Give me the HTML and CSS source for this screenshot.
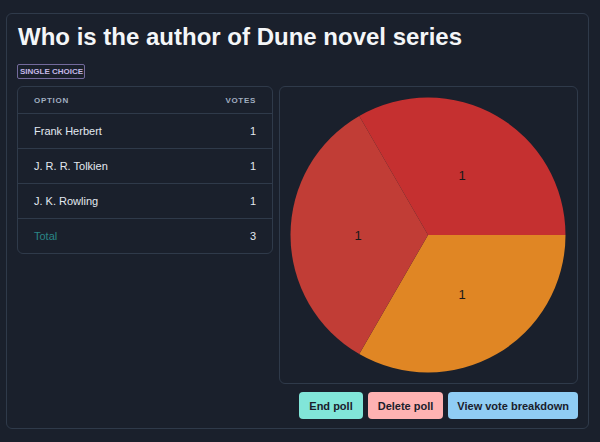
FILE: index.html
```html
<!DOCTYPE html>
<html lang="en">
<head>
<meta charset="utf-8">
<title>Poll</title>
<link rel="stylesheet" href="styles.css">
</head>
<body>
<div class="card">
  <h1 class="title">Who is the author of Dune novel series</h1>
  <span class="badge">Single choice</span>
  <div class="content">
    <div class="table-card">
      <table class="votes">
        <thead>
          <tr><th>Option</th><th class="num">Votes</th></tr>
        </thead>
        <tbody>
          <tr><td>Frank Herbert</td><td class="num">1</td></tr>
          <tr><td>J. R. R. Tolkien</td><td class="num">1</td></tr>
          <tr><td>J. K. Rowling</td><td class="num">1</td></tr>
          <tr class="total"><td class="total-label">Total</td><td class="num">3</td></tr>
        </tbody>
      </table>
    </div>
    <div class="right">
      <div class="chart-card">
        <svg class="pie" width="276" height="276" viewBox="0 0 276 276">
          <path d="M138,138 L69.25,18.92 A137.5,137.5 0 0 1 275.5,138 Z" fill="#c53030"/>
          <path d="M138,138 L275.5,138 A137.5,137.5 0 0 1 69.25,257.08 Z" fill="#e08624"/>
          <path d="M138,138 L69.25,257.08 A137.5,137.5 0 0 1 69.25,18.92 Z" fill="#c13d36"/>
          <text x="172" y="78" class="lbl">1</text>
          <text x="68" y="138" class="lbl">1</text>
          <text x="172" y="197" class="lbl">1</text>
        </svg>
      </div>
      <div class="actions">
        <button class="btn btn-teal">End poll</button>
        <button class="btn btn-red">Delete poll</button>
        <button class="btn btn-blue">View vote breakdown</button>
      </div>
    </div>
  </div>
</div>
</body>
</html>
```
FILE: styles.css
```css
html, body {
  margin: 0;
  padding: 0;
  background: #1a202c;
}
body {
  font-family: "Liberation Sans", Arial, sans-serif;
  color: #e2e8f0;
  padding: 13px 11px 0 6px;
  width: 583px;
}
.card {
  border: 1px solid #2f3a4a;
  border-radius: 6px;
  padding: 8px 10px 9px 10px;
  display: flex;
  flex-direction: column;
  align-items: flex-start;
}
.title {
  margin: 0;
  font-size: 24px;
  line-height: 29px;
  font-weight: 700;
  color: #f4f6f8;
  padding-left: 1px;
}
.badge {
  margin-top: 13px;
  display: inline-block;
  border: 1px solid #736a9c;
  border-radius: 2px;
  color: #c4b8e6;
  font-size: 8px;
  font-weight: 700;
  text-transform: uppercase;
  line-height: 13px;
  padding: 0 1px 0 2px;
}
.content {
  margin-top: 7px;
  width: 100%;
  display: grid;
  grid-template-columns: 256px 1fr;
  gap: 6px;
  align-items: start;
}
.table-card {
  border: 1px solid #2f3a4a;
  border-radius: 6px;
  overflow: hidden;
}
.votes {
  width: 100%;
  border-collapse: collapse;
}
.votes th {
  font-size: 8px;
  font-weight: 700;
  letter-spacing: 0.7px;
  text-transform: uppercase;
  color: #a0aec0;
  text-align: left;
  height: 26px;
  padding: 0 16px;
  border-bottom: 1px solid #2f3a4a;
}
.votes td {
  font-size: 11px;
  height: 34px;
  padding: 0 16px;
  color: #e2e8f0;
  border-bottom: 1px solid #2f3a4a;
}
.votes tr:last-child td {
  border-bottom: none;
}
.votes .num {
  text-align: right;
}
.votes .total-label {
  color: #2a8585;
}
.right {
  display: flex;
  flex-direction: column;
  align-items: flex-end;
}
.chart-card {
  width: 100%;
  box-sizing: border-box;
  border: 1px solid #2f3a4a;
  border-radius: 6px;
  padding: 10px;
  display: flex;
}
.pie {
  display: block;
}
.lbl {
  font-family: "Liberation Sans", Arial, sans-serif;
  font-size: 13px;
  fill: #1a1a1a;
  text-anchor: middle;
  dominant-baseline: central;
}
.actions {
  margin-top: 8px;
  display: flex;
  gap: 5px;
}
.btn {
  font-family: "Liberation Sans", Arial, sans-serif;
  font-size: 11px;
  font-weight: 700;
  color: #1a202c;
  border: none;
  border-radius: 4px;
  height: 27px;
  padding: 0 10px;
}
.btn-teal { background: #81e6d9; }
.btn-red { background: #feb2b2; }
.btn-blue { background: #90cdf4; padding: 0 9px; }
```
